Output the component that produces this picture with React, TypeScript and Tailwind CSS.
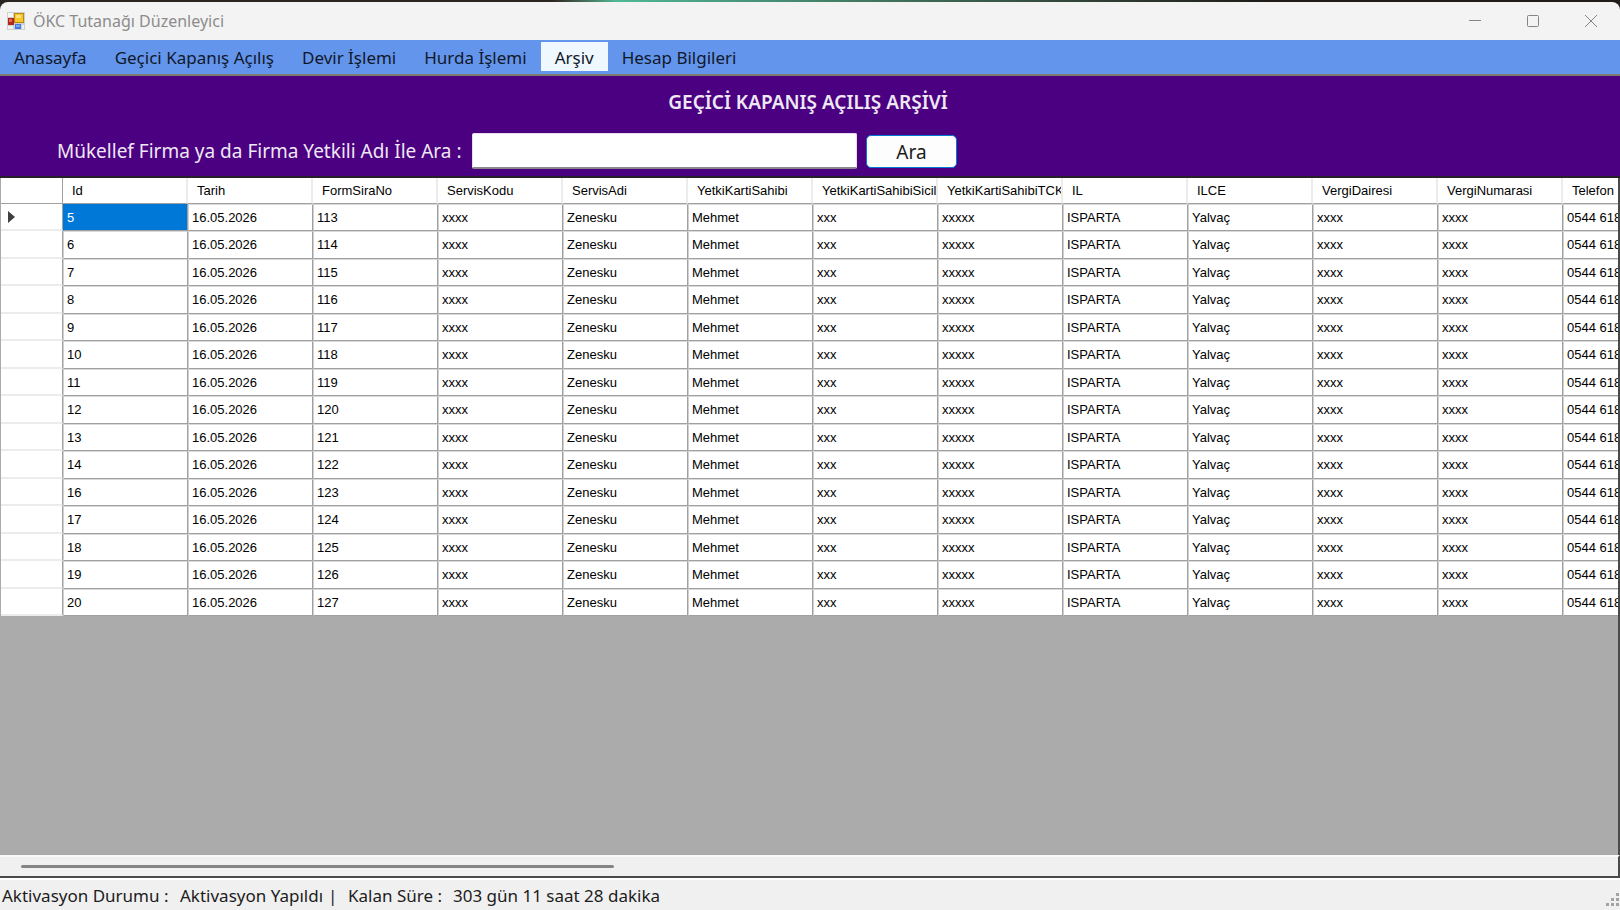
import type { ReactNode } from "react";

const menuItems = ["Anasayfa", "Geçici Kapanış Açılış", "Devir İşlemi", "Hurda İşlemi", "Arşiv", "Hesap Bilgileri"];

const columns = [
  "Id", "Tarih", "FormSiraNo", "ServisKodu", "ServisAdi", "YetkiKartiSahibi", "YetkiKartiSahibiSicil",
  "YetkiKartiSahibiTCKN", "IL", "ILCE", "VergiDairesi", "VergiNumarasi", "Telefon",
];

const ids = [5, 6, 7, 8, 9, 10, 11, 12, 13, 14, 16, 17, 18, 19, 20];

const rows = ids.map((id, i) => [
  String(id), "16.05.2026", String(113 + i), "xxxx", "Zenesku", "Mehmet", "xxx", "xxxxx",
  "ISPARTA", "Yalvaç", "xxxx", "xxxx", "0544 618",
]);

function AppIcon() {
  return (
    <svg width="18" height="18" viewBox="0 0 18 18" aria-hidden="true">
      <rect width="18" height="18" fill="#cfcfcf" />
      <rect x="1" y="1" width="5" height="4" fill="#f6f6f6" />
      <rect x="1" y="14" width="5" height="3" fill="#f0f0f0" />
      <rect x="15" y="13" width="2" height="4" fill="#f0f0f0" />
      <rect x="1" y="6" width="6" height="7" fill="#b3261c" />
      <rect x="2" y="7" width="3" height="3" fill="#dc6a5a" />
      <rect x="7" y="1" width="10" height="10" fill="#b98a12" />
      <rect x="8" y="2" width="8" height="8" fill="#f7c72f" />
      <rect x="9" y="3" width="5" height="3" fill="#fde27a" />
      <rect x="8" y="12" width="6" height="5" fill="#3f7be0" />
      <rect x="9" y="13" width="4" height="2" fill="#78a8f4" />
    </svg>
  );
}

function CaptionButton({ label, children }: { label: string; children: ReactNode }) {
  return (
    <button type="button" aria-label={label} className="flex h-full w-[58px] items-center justify-center">
      <svg width="14" height="14" viewBox="0 0 14 14" fill="none" stroke="#858585" strokeWidth="1" aria-hidden="true">
        {children}
      </svg>
    </button>
  );
}

function TitleBar() {
  return (
    <header className="flex h-[38px] shrink-0 items-center rounded-t-lg bg-[#f3f3f3] pl-[7px]">
      <AppIcon />
      <h1 className="ml-2 flex-1 font-['Noto_Sans',sans-serif] text-base text-[#8c8c8c]">ÖKC Tutanağı Düzenleyici</h1>
      <CaptionButton label="Simge durumuna küçült"><path d="M1 6.5h12" /></CaptionButton>
      <CaptionButton label="Ekranı kapla"><rect x="1.5" y="1.5" width="11" height="11" rx="1" /></CaptionButton>
      <CaptionButton label="Kapat"><path d="M1 1l12 12M13 1L1 13" /></CaptionButton>
    </header>
  );
}

function MenuBar() {
  return (
    <nav className="flex h-9 shrink-0 items-start border-b-2 border-[#7b7b72] bg-[#6495ed] pt-[2px]">
      {menuItems.map((item) => (
        <a
          key={item}
          href="#"
          className={`flex h-[29px] items-center px-[14px] pt-[2px] font-['Noto_Sans',sans-serif] text-[17px] whitespace-nowrap text-[#101828] ${item === "Arşiv" ? "bg-[#f0f8ff]" : ""}`}
        >
          {item}
        </a>
      ))}
    </nav>
  );
}

function SearchPanel() {
  return (
    <section className="flex h-[102px] shrink-0 flex-col border-b-2 border-[#252029] bg-[#4b0082] pt-[14px] font-['Noto_Sans',sans-serif] text-[19px] text-[#eee8f3]">
      <h2 className="pr-1 text-center leading-6 font-semibold">GEÇİCİ KAPANIŞ AÇILIŞ ARŞİVİ</h2>
      <form className="mt-[19px] flex items-center pl-[57px]" onSubmit={(e) => e.preventDefault()}>
        <label htmlFor="search" className="w-[415px] whitespace-nowrap">Mükellef Firma ya da Firma Yetkili Adı İle Ara :</label>
        <input id="search" type="text" className="h-9 w-[385px] rounded-[2px] border border-b-2 border-[#e6dcec] border-b-[#8d8790] bg-white px-2 text-black outline-none" />
        <button type="submit" className="ml-[9px] h-[33px] w-[91px] rounded-[5px] border border-[#0078d4] bg-[#fdfdfd] pt-px leading-6 text-[#1b1b1b]">Ara</button>
      </form>
    </section>
  );
}

function ArchiveGrid() {
  return (
    <main className="min-h-0 flex-1 overflow-hidden border-r-2 border-[#4a4a4a] bg-[#ababab] pl-px">
      <table className="w-[1687px] table-fixed border-separate border-spacing-0 bg-white font-['Liberation_Sans',Arial,sans-serif] text-[13px] leading-5 text-black">
        <colgroup>
          <col className="w-[62px]" />
          {columns.map((c) => <col key={c} className="w-[125px]" />)}
        </colgroup>
        <thead>
          <tr className="h-[26px]">
            <th aria-label="Satır" className="border-r border-b border-[#a0a0a0] p-0" />
            {columns.map((c) => (
              <th key={c} scope="col" className="overflow-hidden border-r-2 border-b border-r-[#ececec] border-b-[#a0a0a0] p-0 pt-px pl-[9px] text-left font-normal whitespace-nowrap">{c}</th>
            ))}
          </tr>
        </thead>
        <tbody>
          {rows.map((row, r) => (
            <tr key={row[0]} className="odd:h-[27px] even:h-[28px]">
              <th scope="row" aria-label={`Satır ${row[0]}`} className="border-r border-b-2 border-r-[#a0a0a0] border-b-[#ececec] p-0">
                {r === 0 && (
                  <svg className="ml-[7px]" width="7" height="12" viewBox="0 0 7 12" aria-hidden="true"><path d="M0 0l7 6-7 6z" fill="#404040" /></svg>
                )}
              </th>
              {row.map((cell, c) => (
                <td key={c} className={`overflow-hidden border border-r-[#a0a0a0] border-b-[#a0a0a0] p-0 pl-[3px] whitespace-nowrap ${r === 0 && c === 0 ? "border-t-[#0078d7] border-l-[#0078d7] bg-[#0078d7] text-white" : "border-t-[#dadada] border-l-[#d0d0d0]"}`}>{cell}</td>
              ))}
            </tr>
          ))}
        </tbody>
      </table>
    </main>
  );
}

function StatusBar() {
  return (
    <footer className="flex h-8 shrink-0 items-center border-t-2 border-white bg-[#f0f0f0] pl-[2px] font-['Noto_Sans',sans-serif] text-[17px] whitespace-nowrap text-[#1c1c1c]">
      <span className="w-[178px] pt-[2px]">Aktivasyon Durumu :</span>
      <span className="w-[148px] pt-[2px]">Aktivasyon Yapıldı</span>
      <span className="w-5 pt-[2px]">|</span>
      <span className="w-[105px] pt-[2px]">Kalan Süre :</span>
      <span className="flex-1 pt-[2px]">303 gün 11 saat 28 dakika</span>
      <svg className="self-end" width="14" height="18" viewBox="0 0 14 18" fill="#a3a3a3" aria-hidden="true">
        <path d="M10 1h3v3h-3zM5 6h3v3H5zM10 6h3v3h-3zM0 11h3v3H0zM5 11h3v3H5zM10 11h3v3h-3z" />
      </svg>
    </footer>
  );
}

export default function App() {
  return (
    <div className="flex h-screen flex-col overflow-hidden bg-[#f0f0f0]">
      <div className="flex shrink-0 flex-col bg-linear-to-r from-[#2a2420] from-34% via-[#4fb894] via-38% to-[#1f1c1a] to-78% pt-[2px]">
        <TitleBar />
      </div>
      <MenuBar />
      <SearchPanel />
      <ArchiveGrid />
      <div className="flex h-[23px] shrink-0 items-start border-t-2 border-r-2 border-b-2 border-t-[#f8f8f8] border-r-[#4a4a4a] border-b-[#4a4a4a] pt-2 pl-[21px]">
        <div className="h-[3px] w-[593px] max-w-full rounded-full bg-[#858585]" />
      </div>
      <StatusBar />
    </div>
  );
}
